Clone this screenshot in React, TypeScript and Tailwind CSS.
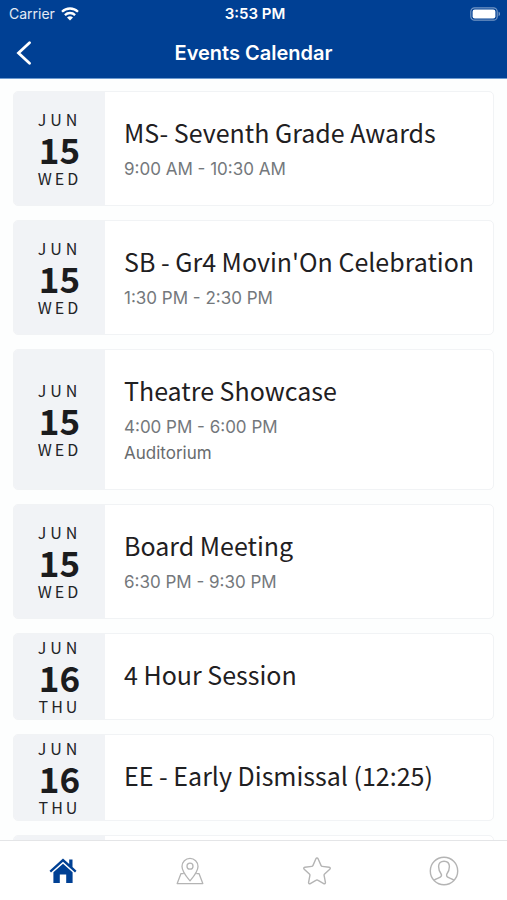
type CalendarEvent = {
  month: string;
  day: string;
  weekday: string;
  title: string;
  time?: string;
  location?: string;
};

const events: CalendarEvent[] = [
  { month: "JUN", day: "15", weekday: "WED", title: "MS- Seventh Grade Awards", time: "9:00 AM - 10:30 AM" },
  { month: "JUN", day: "15", weekday: "WED", title: "SB - Gr4 Movin'On Celebration", time: "1:30 PM - 2:30 PM" },
  { month: "JUN", day: "15", weekday: "WED", title: "Theatre Showcase", time: "4:00 PM - 6:00 PM", location: "Auditorium" },
  { month: "JUN", day: "15", weekday: "WED", title: "Board Meeting", time: "6:30 PM - 9:30 PM" },
  { month: "JUN", day: "16", weekday: "THU", title: "4 Hour Session" },
  { month: "JUN", day: "16", weekday: "THU", title: "EE - Early Dismissal (12:25)" },
];

function StatusBar() {
  return (
    <div className="grid grid-cols-3 items-center h-[27px] pl-[9px] pr-[6px] leading-[20px]">
      <div className="flex items-center gap-[6px] text-[14px] text-white/90">
        Carrier
        <svg viewBox="0 0 18 14" className="w-[18px] h-[14px]" fill="none" stroke="white" strokeWidth="2.3">
          <path d="M1 4.8a11.4 11.4 0 0 1 16 0" />
          <path d="M3.9 8.1a7.3 7.3 0 0 1 10.2 0" />
          <path d="M9 13.6 6 10.6a4.3 4.3 0 0 1 6 0z" fill="white" stroke="none" />
        </svg>
      </div>
      <p className="text-center text-[15px] font-[600]">3:53 PM</p>
      <svg viewBox="0 0 31 14" className="w-[31px] h-[14px] justify-self-end" fill="none">
        <rect x="0.8" y="0.8" width="26.4" height="12.4" rx="3.8" stroke="white" strokeOpacity="0.45" strokeWidth="1.2" />
        <rect x="2.6" y="2.6" width="22.8" height="8.8" rx="2.2" fill="white" />
        <path d="M28.6 4.8c1.8.6 1.8 3.8 0 4.4z" fill="white" fillOpacity="0.5" />
      </svg>
    </div>
  );
}

function Header() {
  return (
    <header className="shrink-0 bg-[#004094] text-white border-b border-[#6d9bd0]">
      <StatusBar />
      <div className="grid grid-cols-[48px_1fr_48px] items-center h-[51px]">
        <button type="button" aria-label="Back" className="flex items-center h-full pl-[16px]">
          <svg viewBox="0 0 16 24" className="w-[16px] h-[24px]" fill="none" stroke="white" strokeWidth="2.8" strokeLinecap="round">
            <path d="M13.5 1.8 2.5 12l11 10.2" />
          </svg>
        </button>
        <h1 className="text-center text-[20px] leading-[24px] font-[600]">Events Calendar</h1>
      </div>
    </header>
  );
}

function EventCard({ month, day, weekday, title, time, location }: CalendarEvent) {
  return (
    <li className="flex rounded-[5px] border border-[#f1f3f5] bg-white overflow-hidden">
      <div className="w-[91px] shrink-0 bg-[#f1f3f6] flex flex-col items-center justify-center text-[#222427] font-['Noto_Sans_CJK_SC',sans-serif]">
        <p className="text-[16px] leading-[26px] tracking-[4px]">{month}</p>
        <p className="text-[35px] leading-[34px] font-[700] text-[#1b1c1e]">{day}</p>
        <p className="text-[16px] leading-[25px] tracking-[3px]">{weekday}</p>
      </div>
      <div className="min-w-0 grow pt-[22px] pb-[23px] pl-[19px]">
        <h2 className="text-[25px] leading-[36px] text-[#1f2022] font-['Noto_Sans_CJK_SC',sans-serif]">{title}</h2>
        {time && <p className="mt-[6px] text-[17px] leading-[26px] text-[#74787c]">{time}</p>}
        {location && <p className="text-[17px] leading-[26px] text-[#686b6e]">{location}</p>}
      </div>
    </li>
  );
}

function TabBar() {
  return (
    <nav className="shrink-0 grid grid-cols-4 h-[60px] border-t border-[#e4e5e7] bg-white text-[#b4b4b4]">
      <a href="#home" aria-label="Home" className="flex items-center justify-center text-[#004094]">
        <svg viewBox="0 0 28 28" className="w-[28px] h-[28px]" fill="currentColor">
          <path d="M14 1.500 20.200 7V2.600h3.300V10l4 3.700-1.500 1.700L14 4.800 2 15.400.5 13.700z" />
          <path d="M14 6.800 23.600 15.300V26h-6.400v-8.600h-6.400V26H4.400V15.300z" />
        </svg>
      </a>
      <a href="#map" aria-label="Map" className="flex items-center justify-center">
        <svg viewBox="0 0 28 28" className="w-[28px] h-[28px]" fill="none" stroke="currentColor" strokeWidth="1.3" strokeLinejoin="round" strokeLinecap="round">
          <path d="M14 23.8C11 20.2 6 14.6 6 9.4a8 8 0 0 1 16 0c0 5.2-5 10.8-8 14.4z" />
          <circle cx="14" cy="9.2" r="3" />
          <path d="M7.3 16.6H5L1.2 26.6h25.6L23 16.6h-2.3" />
        </svg>
      </a>
      <a href="#favorites" aria-label="Favorites" className="flex items-center justify-center">
        <svg viewBox="0 0 28 28" className="w-[28px] h-[28px]" fill="none" stroke="currentColor" strokeWidth="1.4" strokeLinejoin="round">
          <path d="M12.9 1.8c.5-1 1.7-1 2.2 0l3 6.8c.2.5.6.8 1.1.8l7 .8c1.1.2 1.4 1.3.6 2l-5.2 4.8c-.4.4-.6.8-.5 1.3l1.3 7.1c.2 1.1-.8 1.7-1.7 1.2l-6-3.4c-.5-.3-.9-.3-1.4 0l-6 3.4c-.9.5-1.9-.1-1.7-1.2l1.3-7.1c.1-.5-.1-.9-.5-1.3l-5.2-4.8c-.8-.7-.5-1.8.6-2l7-.8c.5 0 .9-.3 1.1-.8z" />
        </svg>
      </a>
      <a href="#profile" aria-label="Profile" className="flex items-center justify-center">
        <svg viewBox="0 0 30 30" className="w-[30px] h-[30px]" fill="none" stroke="currentColor" strokeWidth="1.4" strokeLinejoin="round">
          <circle cx="15" cy="15" r="13.7" />
          <path d="M5 24.3c1.5-1.5 4.2-2 6.3-3.2 1.2-.7 1.4-2.2.7-3.4-1.4-1.8-2.4-3.7-2.4-7.1 0-3.5 2.2-5.4 5.4-5.4s5.4 1.9 5.4 5.4c0 3.4-1 5.3-2.4 7.1-.7 1.2-.5 2.7.7 3.4 2.1 1.2 4.8 1.7 6.3 3.2" />
        </svg>
      </a>
    </nav>
  );
}

export default function App() {
  return (
    <div className="h-screen flex flex-col bg-[#fdfefe] font-[Inter,sans-serif]">
      <Header />
      <main className="grow min-h-0 overflow-y-auto [scrollbar-width:none]">
        <ul className="flex flex-col gap-[14px] px-[13px] pt-[12px]">
          {events.map((event) => (
            <EventCard key={event.title} {...event} />
          ))}
          <li className="flex h-[87px] rounded-[5px] border border-[#f1f3f5] bg-white overflow-hidden">
            <div className="w-[91px] bg-[#f1f3f6]" />
          </li>
        </ul>
      </main>
      <TabBar />
    </div>
  );
}
